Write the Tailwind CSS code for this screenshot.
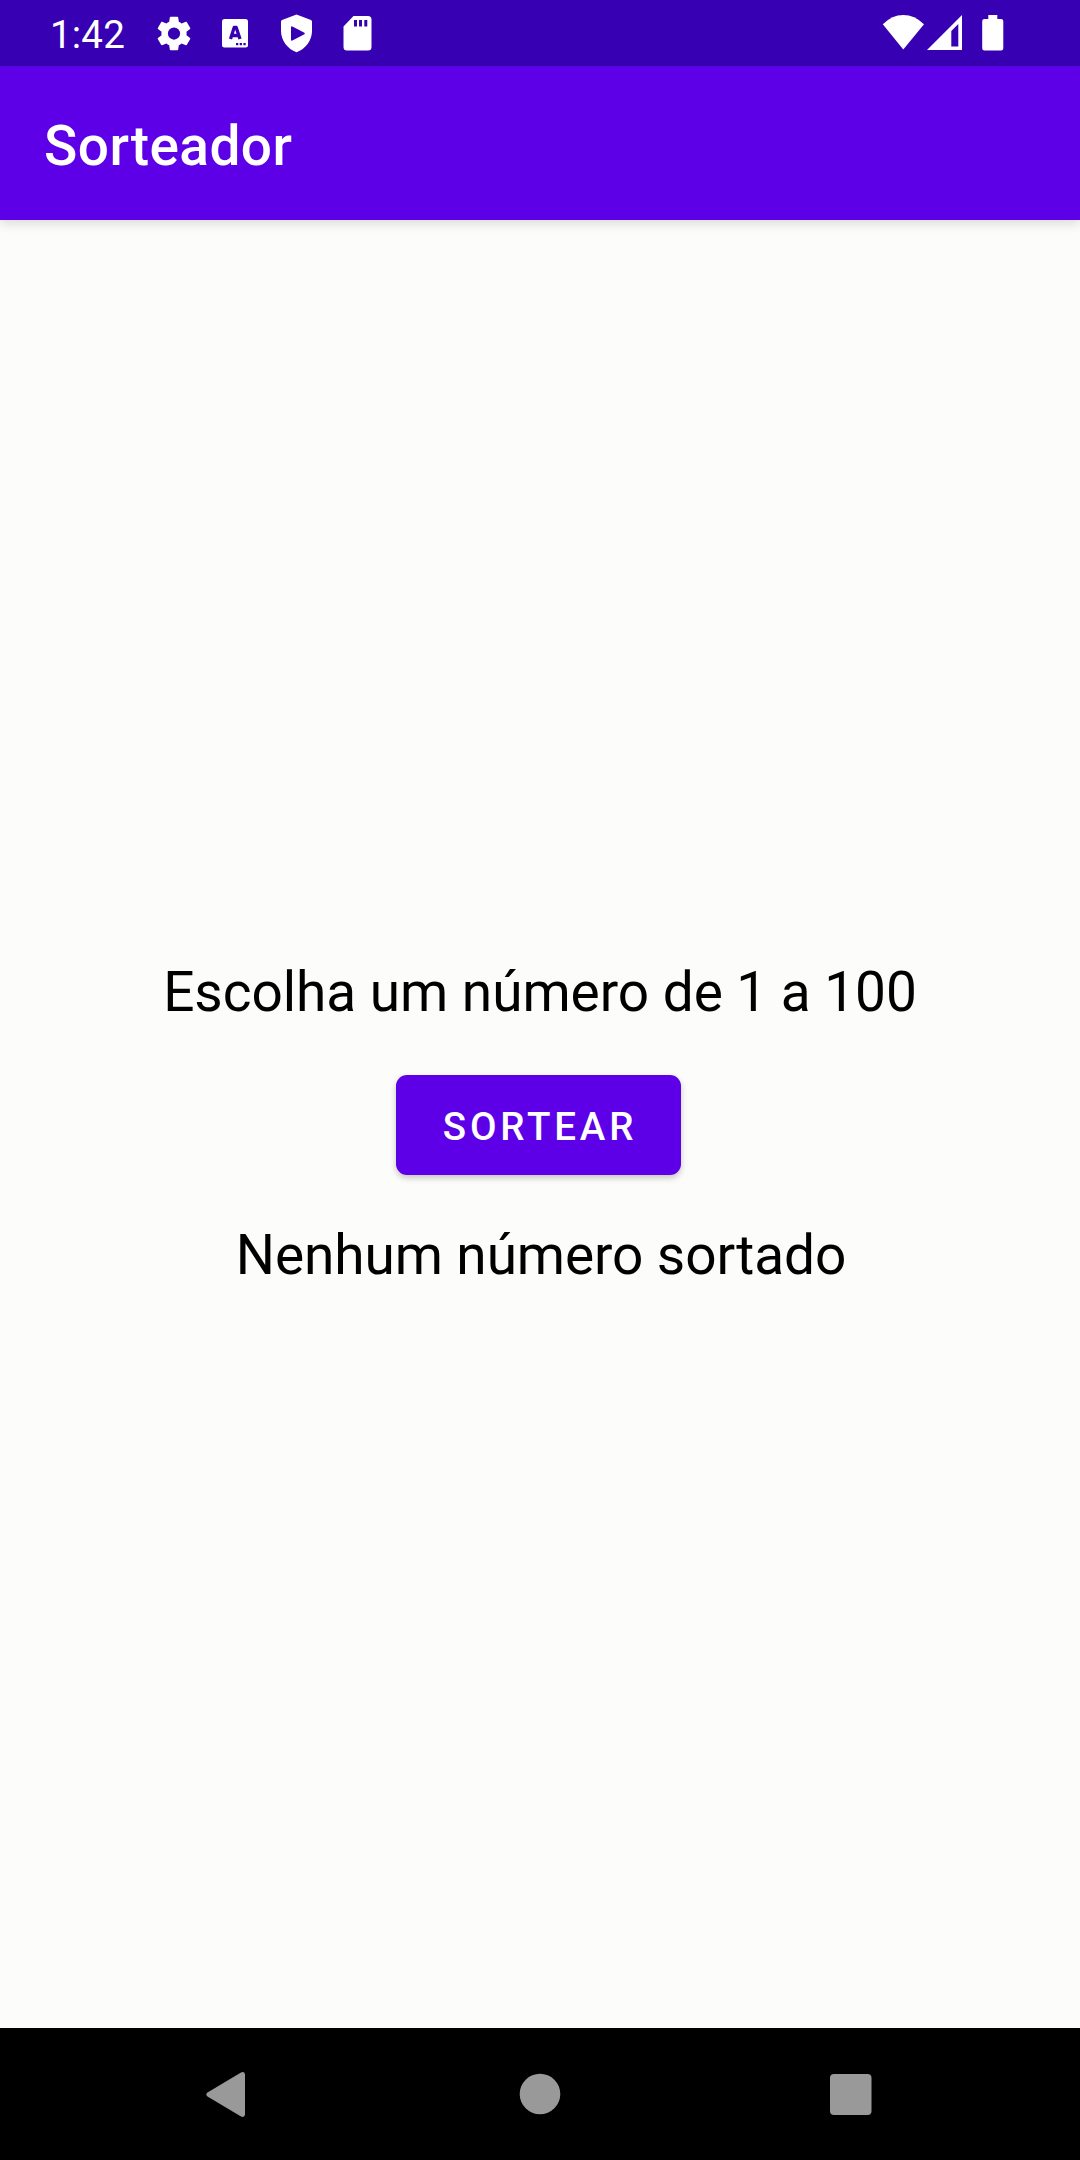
<!DOCTYPE html>
<html lang="pt-BR">
<head>
<meta charset="utf-8">
<title>Sorteador</title>
<script src="https://cdn.jsdelivr.net/npm/@tailwindcss/browser@4"></script>
</head>
<body class="flex h-[2160px] w-[1080px] flex-col overflow-hidden bg-[#fcfcfa] font-[Roboto,sans-serif]">
<div class="flex h-[66px] shrink-0 items-center justify-between bg-[#3700b3] pl-[50px] pr-[72px] text-white">
  <div class="flex items-center">
    <span class="w-[103px] pt-[3px] text-[38.5px] leading-[64px] tracking-[0.2px]">1:42</span>
    <div class="flex gap-[19px]">
      <svg class="h-[66px] w-[42px]" viewBox="153 0 42 66" fill="currentColor"><path transform="translate(153 12.5) scale(1.75)" d="M19.14 12.94c.04-.3.06-.61.06-.94 0-.32-.02-.64-.07-.94l2.03-1.58c.18-.14.23-.41.12-.61l-1.92-3.32c-.12-.22-.37-.29-.59-.22l-2.39.96c-.5-.38-1.03-.7-1.62-.94l-.36-2.54c-.04-.24-.24-.41-.48-.41h-3.84c-.24 0-.43.17-.47.41l-.36 2.54c-.59.24-1.13.57-1.62.94l-2.39-.96c-.22-.08-.47 0-.59.22L2.74 8.87c-.12.21-.08.47.12.61l2.03 1.58c-.05.3-.09.63-.09.94s.02.64.07.94l-2.03 1.58c-.18.14-.23.41-.12.61l1.92 3.32c.12.22.37.29.59.22l2.39-.96c.5.38 1.03.7 1.62.94l.36 2.54c.05.24.24.41.48.41h3.84c.24 0 .44-.17.47-.41l.36-2.54c.59-.24 1.13-.56 1.62-.94l2.39.96c.22.08.47 0 .59-.22l1.92-3.32c.12-.22.07-.47-.12-.61zM12 15.5a3.5 3.5 0 1 1 0-7 3.5 3.5 0 0 1 0 7z"/></svg>
      <svg class="h-[66px] w-[42px]" viewBox="214 0 42 66"><rect x="222" y="19" width="26" height="28.5" rx="2.5" fill="currentColor"/><path d="M230.500 39 234.200 27.500h2L240 39M231.700 35.500h7" fill="none" stroke="#3700b3" stroke-width="3.300" stroke-linejoin="round"/><path d="M236 43h2.300v2.300H236zM239.700 43h2.300v2.300h-2.300zM243.400 43h2.300v2.300h-2.300z" fill="#3700b3"/></svg>
      <svg class="h-[66px] w-[42px]" viewBox="275 0 42 66" fill="currentColor"><path fill-rule="evenodd" d="M296.500 14.500 282 20q-1 .5-1 1.500V31c0 9.500 6.500 18 15.500 21.300C305.500 49 312 40.500 312 31v-9.500q0-1-1-1.500zM291 27.200v12.600q.2 1.200 1.400.7l12-6.200q.9-.8 0-1.600l-12-6.200q-1.200-.5-1.400.7z"/></svg>
      <svg class="h-[66px] w-[42px]" viewBox="336 0 42 66" fill="currentColor"><path fill-rule="evenodd" d="M353.500 16H368q3.500 0 3.500 3.500V47q0 3.500-3.500 3.500h-21q-3.500 0-3.500-3.500V26.500zM354 20v6.500h3V20zm5 0v6.500h3V20zm5.300 0v6.500h3V20z"/></svg>
    </div>
  </div>
  <svg class="h-[66px] w-[128px]" viewBox="880 0 128 66" fill="currentColor"><path d="M903.300 49.500 882.800 24.300Q892 15 903.300 15T924 24.300z"/><path fill-rule="evenodd" d="M962 15v35h-35zM958.300 24l-7 7v15.500h7z"/><path d="M988.300 15h9v4h3.700q2.300 0 2.300 2.300v27q0 2.300-2.300 2.300h-16.500q-2.300 0-2.300-2.300v-27q0-2.300 2.300-2.300h3.800z"/></svg>
</div>
<header class="flex h-[154px] shrink-0 items-center bg-[#5d00e8] px-11 pt-[5px] text-white shadow-[0_4px_10px_rgba(0,0,0,0.13)]">
  <h1 class="text-[55px] font-medium leading-[64px] tracking-[0.45px]">Sorteador</h1>
</header>
<main class="flex grow flex-col items-center pt-[740px] text-[55px] leading-[64px] text-black">
  <p class="tracking-[-0.05px]">Escolha um número de 1 a 100</p>
  <button class="mt-[51px] mr-[3px] h-[100px] w-[285px] rounded-[11px] bg-[#5d00e8] pl-[3px] pt-[5px] text-[38.5px] font-medium leading-none tracking-[3.8px] text-white shadow-[0_3px_6px_rgba(0,0,0,0.22)]">SORTEAR</button>
  <p class="mt-[48px] pl-[2px] tracking-[-0.1px]">Nenhum número sortado</p>
</main>
<nav class="flex h-[132px] shrink-0 items-center justify-center bg-black text-[#999999]">
  <svg class="h-[132px] w-[720px]" viewBox="180 2028 720 132" fill="currentColor"><path d="M207.500 2092.500 241 2072.500q3.500-1.500 4 2v40q-.5 3.500-4 2l-33.500-20q-2.500-2 0-4z"/><circle cx="540" cy="2094" r="20.300"/><rect x="830" y="2074" width="41.500" height="41" rx="4"/></svg>
</nav>
</body>
</html>
